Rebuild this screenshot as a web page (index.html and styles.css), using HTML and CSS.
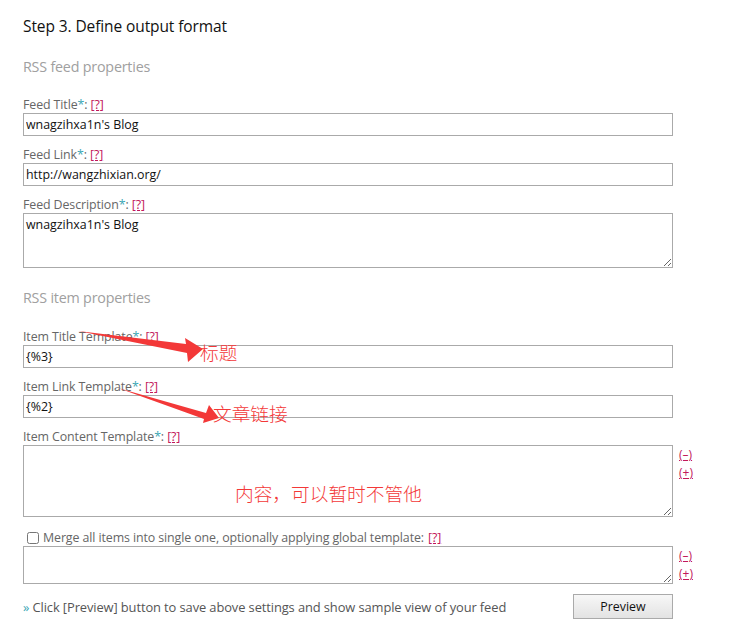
FILE: index.html
```html
<!DOCTYPE html>
<html>
<head>
<meta charset="utf-8">
<link rel="stylesheet" href="styles.css">
</head>
<body>
<div class="page">
  <h2 class="step">Step 3. Define output format</h2>
  <h3 class="section">RSS feed properties</h3>
  <div class="field">
    <div class="label">Feed Title<span class="ast">*</span>: <a class="help">[?]</a></div>
    <div class="row"><input class="text" value="wnagzihxa1n's Blog"></div>
  </div>
  <div class="field">
    <div class="label">Feed Link<span class="ast">*</span>: <a class="help">[?]</a></div>
    <div class="row"><input class="text" value="http://wangzhixian.org/"></div>
  </div>
  <div class="field">
    <div class="label">Feed Description<span class="ast">*</span>: <a class="help">[?]</a></div>
    <div class="row"><textarea class="area desc">wnagzihxa1n's Blog</textarea></div>
  </div>
  <h3 class="section second">RSS item properties</h3>
  <div class="field">
    <div class="label">Item Title Template<span class="ast">*</span>: <a class="help">[?]</a></div>
    <div class="row"><input class="text" value="{%3}"></div>
  </div>
  <div class="field">
    <div class="label">Item Link Template<span class="ast">*</span>: <a class="help">[?]</a></div>
    <div class="row"><input class="text" value="{%2}"></div>
  </div>
  <div class="field">
    <div class="label">Item Content Template<span class="ast">*</span>: <a class="help">[?]</a></div>
    <div class="row">
      <textarea class="area content"></textarea>
      <div class="sizers"><a class="sz">(–)</a><a class="sz">(+)</a></div>
    </div>
  </div>
  <div class="field merge">
    <label class="label check"><input type="checkbox" class="cb"> Merge all items into single one, optionally applying global template: <a class="help">[?]</a></label>
    <div class="row">
      <textarea class="area global"></textarea>
      <div class="sizers small"><a class="sz">(–)</a><a class="sz">(+)</a></div>
    </div>
  </div>
  <div class="footer">
    <span class="hint"><span class="raquo">»</span> Click [Preview] button to save above settings and show sample view of your feed</span>
    <button class="btn">Preview</button>
  </div>

  <svg class="notes" width="731" height="636" viewBox="0 0 731 636">
    <polygon fill="#f33838" points="78,331 186,344 185,338 203,349 188,362 187,353"/>
    <polygon fill="#f33838" points="118,388 206,413 209,405 219,418 203,423 204,419"/>
    <text x="200" y="360" class="note">标题</text>
    <text x="213" y="421" class="note">文章链接</text>
    <text x="235" y="501" class="note">内容，可以暂时不管他</text>
  </svg>
</div>
</body>
</html>
```
FILE: styles.css
```css
html, body {
  margin: 0;
  padding: 0;
  background: #fff;
}
body {
  font-family: "Open Sans", "Noto Sans", sans-serif;
  color: #555;
}
.page {
  position: relative;
  width: 731px;
  height: 636px;
  padding: 15px 0 0 23px;
  box-sizing: border-box;
  overflow: hidden;
}
.step {
  margin: 0;
  font-size: 15.5px;
  font-weight: 400;
  color: #111;
  line-height: 22px;
  letter-spacing: -0.1px;
}
.section {
  margin: 19px 0 19px;
  font-size: 14.3px;
  font-weight: 400;
  color: #a0a0a0;
  line-height: 22px;
  letter-spacing: -0.2px;
}
.section.second {
  margin-top: 19px;
  margin-bottom: 20px;
}
.field {
  margin-bottom: 11px;
}
.label {
  display: block;
  font-size: 12.4px;
  line-height: 16px;
  color: #666;
  letter-spacing: -0.1px;
}
.ast {
  color: #3aa6b5;
}
.help {
  color: #c2185b;
  text-decoration: underline;
}
.row {
  display: flex;
  align-items: flex-start;
}
.text, .area {
  box-sizing: border-box;
  width: 650px;
  margin: 0;
  border: 1px solid #aaa;
  border-radius: 0;
  font-family: "Open Sans", "Noto Sans", sans-serif;
  font-size: 12.4px;
  color: #111;
  padding: 1px 2px;
  background: #fff;
  outline: none;
}
.text {
  height: 23px;
  line-height: 19px;
}
.area {
  resize: both;
  display: block;
  line-height: 17px;
  padding: 2px 2px;
}
.desc { height: 55px; }
.content { height: 72px; }
.global { height: 38px; }
.sizers {
  display: flex;
  flex-direction: column;
  margin-left: 6px;
  padding-top: 2px;
  gap: 2px;
}
.sz {
  font-size: 12px;
  line-height: 16px;
  color: #c2185b;
  text-decoration: underline;
}
.merge {
  margin-top: 13px;
  margin-bottom: 0;
}
.check {
  display: flex;
  align-items: center;
  gap: 4px;
  padding-left: 4px;
  margin-bottom: 0;
}
.cb {
  margin: 0;
  width: 12px;
  height: 12px;
}
.footer {
  display: flex;
  align-items: center;
  justify-content: space-between;
  width: 650px;
  margin-top: 10px;
}
.hint {
  font-size: 12.9px;
  color: #555;
  letter-spacing: -0.1px;
}
.raquo {
  color: #3aa6b5;
}
.btn {
  width: 100px;
  height: 25px;
  border: 1px solid #aaa;
  border-radius: 0;
  background: linear-gradient(#f7f7f7, #e3e3e3);
  font-family: "Open Sans", "Noto Sans", sans-serif;
  font-size: 12.4px;
  color: #111;
}
.notes {
  position: absolute;
  left: 0;
  top: 0;
  pointer-events: none;
}
.note {
  font-family: "Noto Sans CJK SC", sans-serif;
  font-size: 18.7px;
  font-weight: 300;
  fill: #f33838;
}
```
